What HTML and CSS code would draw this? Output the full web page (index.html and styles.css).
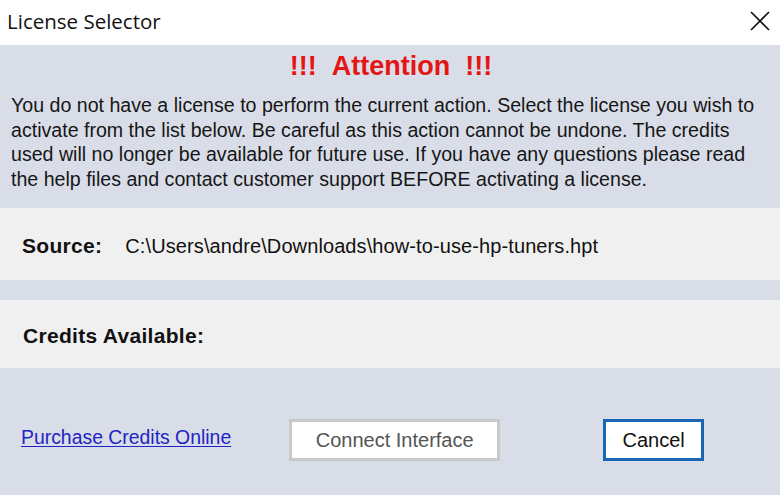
FILE: index.html
```html
<!DOCTYPE html>
<html>
<head>
<meta charset="utf-8">
<link rel="stylesheet" href="styles.css">
</head>
<body>
<div class="window">
  <div class="titlebar">
    <span class="title">License Selector</span>
    <svg class="close" width="20" height="20" viewBox="0 0 20 20"><path d="M1 1 L19 19 M19 1 L1 19" stroke="#111" stroke-width="1.6" fill="none"/></svg>
  </div>
  <div class="body">
    <div class="attention">!!!&nbsp;&nbsp;Attention&nbsp;&nbsp;!!!</div>
    <p class="message">You do not have a license to perform the current action. Select the license you wish to<br>activate from the list below. Be careful as this action cannot be undone. The credits<br>used will no longer be available for future use. If you have any questions please read<br>the help files and contact customer support BEFORE activating a license.</p>
    <div class="panel source">
      <span class="label">Source:</span>
      <span class="path">C:\Users\andre\Downloads\how-to-use-hp-tuners.hpt</span>
    </div>
    <div class="panel credits">
      <span class="label">Credits Available:</span>
    </div>
    <div class="actions">
      <a class="link" href="#">Purchase Credits Online</a>
      <button class="btn connect">Connect Interface</button>
      <button class="btn cancel">Cancel</button>
    </div>
  </div>
</div>
</body>
</html>
```
FILE: styles.css
```css
* { box-sizing: border-box; }
html, body { margin: 0; padding: 0; }
body {
  width: 780px;
  height: 495px;
  overflow: hidden;
  font-family: "Liberation Sans", Arial, sans-serif;
  background: #d9dde8;
}
.window { display: flex; flex-direction: column; height: 495px; }
.titlebar {
  height: 45px;
  background: #fff;
  display: flex;
  align-items: center;
  justify-content: space-between;
  padding: 0 10px 4px 7px;
}
.title {
  font-family: "Open Sans", "Noto Sans", sans-serif;
  font-size: 20.5px;
  color: #111;
}
.body {
  flex: 1;
  background: #d9dde8;
  display: flex;
  flex-direction: column;
}
.attention {
  text-align: center;
  color: #e51515;
  font-weight: bold;
  font-size: 27px;
  line-height: 30px;
  margin-top: 6px;
  padding-left: 2px;
}
.message {
  margin: 12px 0 0;
  padding: 0 0 0 11px;
  font-size: 19.6px;
  line-height: 24.5px;
  color: #161616;
  white-space: nowrap;
  height: 115px;
}
.panel {
  background: #f0f0f0;
  height: 72px;
  display: flex;
  align-items: center;
  color: #111;
}
.source { padding: 4px 0 0 22px; }
.credits { margin-top: 20px; height: 68px; padding: 3px 0 0 23px; }
.label {
  font-weight: bold;
  font-size: 21px;
  letter-spacing: 0.3px;
}
.path {
  font-size: 20px;
  margin-left: 23px;
  letter-spacing: 0.1px;
}
.actions {
  display: flex;
  align-items: center;
  padding: 51px 0 0 21px;
}
.link {
  color: #2124c4;
  font-size: 19.4px;
  text-decoration: underline;
  text-underline-offset: 2px;
  margin-top: -5px;
}
.btn {
  font-family: "Liberation Sans", Arial, sans-serif;
  font-size: 20px;
  background: #fff;
  height: 42px;
  padding: 0;
}
.connect {
  margin-left: 58px;
  width: 211px;
  border: 3px solid #c9c9c9;
  color: #555;
}
.cancel {
  margin-left: 103px;
  width: 101px;
  border: 3px solid #1767b3;
  color: #111;
}
```
